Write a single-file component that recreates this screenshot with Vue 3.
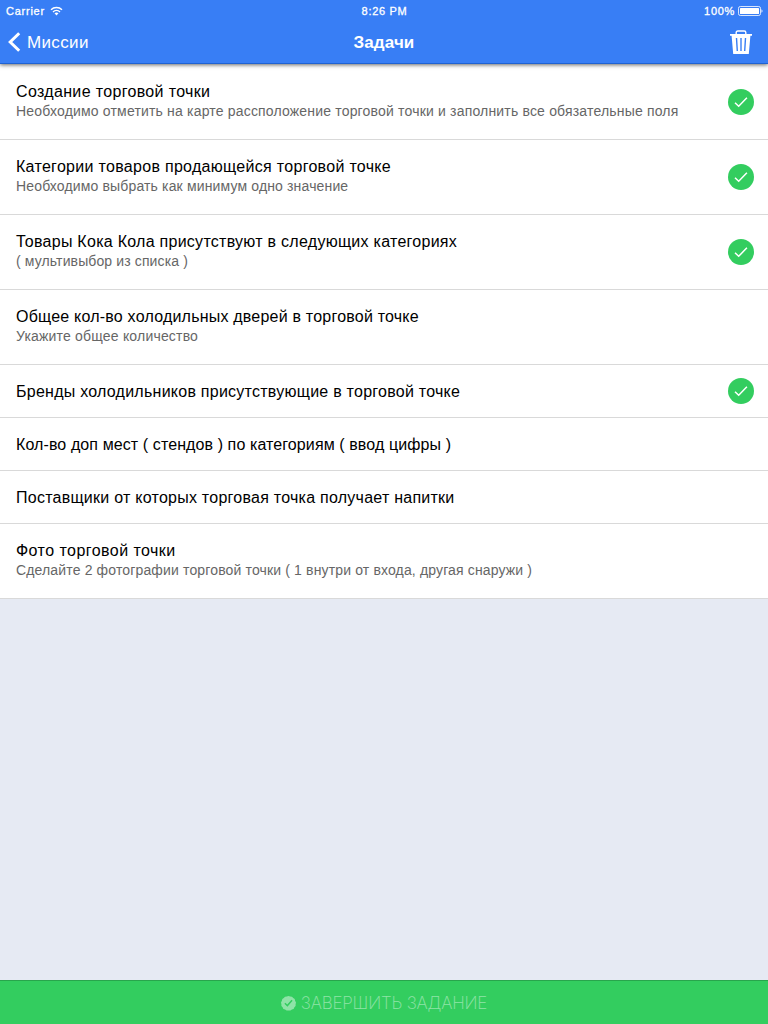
<template>
  <div class="screen">
    <header class="top">
      <div class="status">
        <div class="status-left">
          <span class="carrier">Carrier</span>
          <svg class="wifi" width="13" height="10" viewBox="0 0 13 10">
            <path d="M1 3.7C4 .7 9 .7 12 3.7M3 5.9c2-1.9 5-1.9 7 0" fill="none" stroke="#fff" stroke-width="1.4" />
            <path d="M4.5 7.2c1.2-1 2.8-1 4 0l-2 2.2z" fill="#fff" />
          </svg>
        </div>
        <div class="status-time">8:26 PM</div>
        <div class="status-right">
          <span class="percent">100%</span>
          <svg class="battery" width="25" height="10" viewBox="0 0 25 10">
            <rect x=".5" y=".5" width="22" height="9" rx="1.8" fill="none" stroke="#fff" stroke-opacity=".8" />
            <rect x="2" y="2" width="19" height="6" rx=".6" fill="#fff" />
            <path d="M23.5 3.3c1.3.5 1.3 2.9 0 3.4z" fill="#fff" />
          </svg>
        </div>
      </div>
      <div class="nav">
        <div class="back">
          <svg width="13" height="20" viewBox="0 0 13 20">
            <path d="M11.2 1.2L2.2 10l9 8.8" fill="none" stroke="#fff" stroke-width="3" />
          </svg>
          <span class="back-text">Миссии</span>
        </div>
        <h1 class="nav-title">Задачи</h1>
        <div class="trash">
          <svg width="22" height="25" viewBox="0 0 22 25">
            <path d="M6.2 4.5V2.6Q6.2 1 7.8 1h6.4q1.6 0 1.6 1.6v1.9" fill="none" stroke="#fff" stroke-width="1.4" />
            <path
              d="M0 4h22v1.7h-1.6L18.8 24H3.2L1.6 5.7H0zM5.8 8l.8 13H8L7.2 8zM10.3 8v13h1.4V8zM14.8 8L14 21h1.4l.8-13z"
              fill="#fff" fill-rule="evenodd" />
          </svg>
        </div>
      </div>
    </header>

    <main class="content">
      <ul class="list">
        <li v-for="task in tasks" :key="task.title" class="item" :class="{ 'item-tall': task.note }">
          <div class="item-text">
            <h2 class="item-title"><span :style="{ letterSpacing: task.ts + 'px' }">{{ task.title }}</span></h2>
            <p v-if="task.note" class="item-note"><span :style="{ letterSpacing: task.ns + 'px' }">{{ task.note }}</span></p>
          </div>
          <svg v-if="task.done" class="item-done" width="26" height="26" viewBox="0 0 26 26">
            <circle cx="13" cy="13" r="13" fill="#33cd5f" />
            <path d="M7 13.7l3.7 3.6 8.2-8.5" fill="none" stroke="#fff" stroke-width="1.5" />
          </svg>
        </li>
      </ul>
    </main>

    <footer class="finish">
      <div class="finish-inner">
        <svg width="15" height="15" viewBox="0 0 15 15">
          <path
            d="M7.5 0l1.7.6 1.8.1 1.2 1.3 1.5 1 .4 1.8.9 1.6-.4 1.8v1.8l-1.2 1.3-.8 1.6-1.7.7-1.5 1-1.9-.2-1.9.2-1.5-1-1.7-.7-.8-1.6L.4 10V8.2L0 6.4l.9-1.6.4-1.8 1.5-1L4 .7 5.8.6zM3.4 7.7l3 3 5.2-5.9-1.1-1-4.2 4.8-1.9-1.9z"
            fill="#fff" fill-rule="evenodd" />
        </svg>
        <span class="finish-text">ЗАВЕРШИТЬ ЗАДАНИЕ</span>
      </div>
    </footer>
  </div>
</template>

<script setup>
// ts / ns — межбуквенный интервал заголовка и подписи
const tasks = [
  { title: 'Создание торговой точки', ts: 0.34, note: 'Необходимо отметить на карте рассположение торговой точки и заполнить все обязательные поля', ns: 0.18, done: true },
  { title: 'Категории товаров продающейся торговой точке', ts: 0.3, note: 'Необходимо выбрать как минимум одно значение', ns: 0.15, done: true },
  { title: 'Товары Кока Кола присутствуют в следующих категориях', ts: 0.27, note: '( мультивыбор из списка )', ns: 0.12, done: true },
  { title: 'Общее кол-во холодильных дверей в торговой точке', ts: 0.21, note: 'Укажите общее количество', ns: 0.19, done: false },
  { title: 'Бренды холодильников присутствующие в торговой точке', ts: 0.25, done: true },
  { title: 'Кол-во доп мест ( стендов ) по категориям ( ввод цифры )', ts: 0.1, done: false },
  { title: 'Поставщики от которых торговая точка получает напитки', ts: 0.25, done: false },
  { title: 'Фото торговой точки', ts: 0.45, note: 'Сделайте 2 фотографии торговой точки ( 1 внутри от входа, другая снаружи )', ns: 0.147, done: false }
]
</script>

<style>
body {
  margin: 0;
  background: #e6eaf3;
}
</style>

<style scoped>
.screen {
  display: flex;
  flex-direction: column;
  height: 1024px;
  font-family: "Liberation Sans", Arial, sans-serif;
  background: #e6eaf3;
  overflow: hidden;
}

svg {
  display: block;
  flex: none;
}

.top {
  position: relative;
  z-index: 1;
  box-sizing: border-box;
  height: 64px;
  color: #fff;
  background: #387ef5;
  border-bottom: 1px solid #1f62d2;
  box-shadow: 0 1px 4px rgba(0, 0, 0, 0.6);
}

.status {
  display: grid;
  grid-template-columns: 1fr auto 1fr;
  align-items: center;
  height: 20px;
  padding: 1px 5px 0 6px;
  box-sizing: border-box;
  font-size: 11px;
  -webkit-text-stroke: 0.3px #fff;
}

.status-left,
.status-right {
  display: flex;
  align-items: center;
  gap: 5px;
}

.status-right {
  justify-content: flex-end;
  gap: 3px;
}

.status-time {
  letter-spacing: 0.7px;
}

.carrier {
  letter-spacing: 0.75px;
}

.percent {
  letter-spacing: 0.7px;
}

.nav {
  display: grid;
  grid-template-columns: 1fr auto 1fr;
  align-items: center;
  height: 43px;
  padding: 1px 8px 0;
  box-sizing: border-box;
}

.back {
  display: flex;
  align-items: center;
  gap: 6px;
}

.back-text {
  padding-top: 1px;
  font-size: 17px;
  letter-spacing: 0.35px;
}

.nav-title {
  margin: 0;
  padding-top: 1px;
  font-size: 17px;
  font-weight: bold;
  letter-spacing: 0.1px;
}

.trash {
  display: flex;
  justify-content: flex-end;
  padding: 1px 8px 0 0;
}

.content {
  flex: 1;
}

.list {
  margin: 0;
  padding: 1px 0 0;
  list-style: none;
  background: #fff;
}

.item {
  display: flex;
  align-items: center;
  box-sizing: border-box;
  height: 53px;
  padding: 0 14px 0 16px;
  border-bottom: 1px solid #d9d9d9;
}

.item-text {
  flex: 1;
  padding-top: 2px;
  white-space: nowrap;
}

.item-tall {
  height: 75px;
}

.item-tall .item-text {
  padding: 0 0 2px;
}

.item-title {
  margin: 0;
  font-size: 16px;
  line-height: 20px;
  font-weight: normal;
  color: #000;
}

.item-note {
  margin: 0;
  font-size: 14px;
  line-height: 19px;
  color: #666;
}

.finish {
  display: flex;
  align-items: center;
  justify-content: center;
  box-sizing: border-box;
  height: 44px;
  color: #fff;
  background: #33cd5f;
  border-top: 1px solid #28a54c;
}

.finish-inner {
  display: flex;
  align-items: center;
  gap: 5px;
  padding-top: 1px;
  opacity: 0.45;
}

.finish-text {
  font-family: Inter, "Open Sans", sans-serif;
  font-size: 17px;
  font-weight: 200;
  letter-spacing: -0.18px;
}
</style>
